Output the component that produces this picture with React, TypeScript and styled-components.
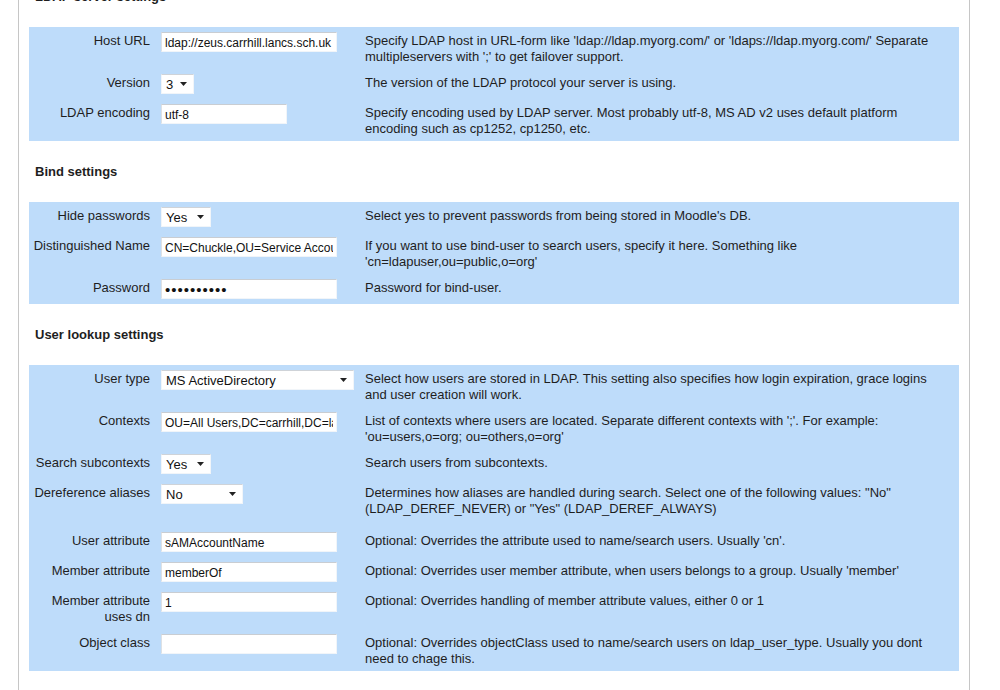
import React from 'react';
import styled, { createGlobalStyle } from 'styled-components';

const PANEL_BLUE = '#bedcfa';
const TEXT = '#1e1e1e';

const GlobalStyle = createGlobalStyle`
  html, body {
    margin: 0;
    padding: 0;
    background: #fff;
    overflow: hidden;
  }
  body {
    font-family: "Liberation Sans", Arial, sans-serif;
    font-size: 13px;
    color: ${TEXT};
  }
`;

const Page = styled.div`
  margin: -34px 0 0 18px;
  width: 930px;
  padding: 0 10px 40px;
  border-left: 1px solid #c6c6c6;
  border-right: 1px solid #c6c6c6;
`;

const SectionTitle = styled.h3`
  margin: 0;
  padding: 23px 0 22px 6px;
  font-size: 13px;
  line-height: 16px;
  font-weight: bold;
`;

const Panel = styled.div`
  background: ${PANEL_BLUE};
  display: flex;
  flex-direction: column;
`;

const Row = styled.div<{ $extra?: number }>`
  display: grid;
  grid-template-columns: 132px 204px 1fr;
  box-sizing: border-box;
  min-height: ${p => 30 + (p.$extra || 0)}px;
  padding: 5px 0 ${p => 4 + (p.$extra || 0)}px;
`;

const Label = styled.div`
  text-align: right;
  padding: 1px 11px 0 2px;
  line-height: 16px;
`;

const Field = styled.div`
  display: flex;
  align-items: flex-start;
`;

const Description = styled.div`
  padding: 1px 20px 0 0;
  line-height: 16px;
`;

const TextInput = styled.input<{ $w: number; $secret?: boolean }>`
  box-sizing: border-box;
  width: ${p => p.$w}px;
  height: 20px;
  margin: 0;
  padding: ${p => (p.$secret ? '0 3px' : '1px 3px 0')};
  border: 1px solid #f1f5f9;
  border-top-color: #c9cdd2;
  border-left-color: #dde1e5;
  background: #fff;
  font-family: "Liberation Sans", Arial, sans-serif;
  font-size: ${p => (p.$secret ? '15px' : '12px')};
  letter-spacing: ${p => (p.$secret ? '1px' : 'normal')};
  color: #111;
  outline: none;
`;

const SelectWrap = styled.span<{ $w: number }>`
  position: relative;
  display: inline-block;
  width: ${p => p.$w}px;
  height: 20px;
`;

const Select = styled.select`
  appearance: none;
  -webkit-appearance: none;
  box-sizing: border-box;
  width: 100%;
  height: 20px;
  margin: 0;
  padding: 1px 14px 0 4px;
  border: 1px solid #f1f5f9;
  border-top-color: #cfd3d8;
  border-radius: 0;
  background: #fff;
  font-family: "Liberation Sans", Arial, sans-serif;
  font-size: 13px;
  color: #111;
  outline: none;
`;

const Arrow = styled.svg`
  position: absolute;
  right: 7px;
  top: 8px;
  width: 7px;
  height: 4px;
  pointer-events: none;
`;

type Setting = {
  label: string;
  kind: 'text' | 'password' | 'select';
  value: string;
  width: number;
  desc: React.ReactNode;
  extra?: number;
};

const DropDown: React.FC<{ value: string; width: number }> = ({ value, width }) => (
  <SelectWrap $w={width}>
    <Select defaultValue={value}>
      <option value={value}>{value}</option>
    </Select>
    <Arrow viewBox="0 0 7 4">
      <path d="M0 0 H7 L3.5 4 Z" fill="#222" />
    </Arrow>
  </SelectWrap>
);

const SettingRow: React.FC<{ s: Setting }> = ({ s }) => (
  <Row $extra={s.extra}>
    <Label>{s.label}</Label>
    <Field>
      {s.kind === 'select' ? (
        <DropDown value={s.value} width={s.width} />
      ) : (
        <TextInput
          type={s.kind}
          $w={s.width}
          $secret={s.kind === 'password'}
          defaultValue={s.value}
        />
      )}
    </Field>
    <Description>{s.desc}</Description>
  </Row>
);

const serverSettings: Setting[] = [
  {
    label: 'Host URL',
    kind: 'text',
    value: 'ldap://zeus.carrhill.lancs.sch.uk',
    width: 176,
    desc: "Specify LDAP host in URL-form like 'ldap://ldap.myorg.com/' or 'ldaps://ldap.myorg.com/' Separate multipleservers with ';' to get failover support.",
  },
  { label: 'Version', kind: 'select', value: '3', width: 33, desc: 'The version of the LDAP protocol your server is using.' },
  {
    label: 'LDAP encoding',
    kind: 'text',
    value: 'utf-8',
    width: 126,
    desc: 'Specify encoding used by LDAP server. Most probably utf-8, MS AD v2 uses default platform encoding such as cp1252, cp1250, etc.',
  },
];

const bindSettings: Setting[] = [
  { label: 'Hide passwords', kind: 'select', value: 'Yes', width: 50, desc: "Select yes to prevent passwords from being stored in Moodle's DB." },
  {
    label: 'Distinguished Name',
    kind: 'text',
    value: 'CN=Chuckle,OU=Service Accounts,DC=carrhill',
    width: 176,
    desc: "If you want to use bind-user to search users, specify it here. Something like 'cn=ldapuser,ou=public,o=org'",
  },
  { label: 'Password', kind: 'password', value: 'xxxxxxxxxx', width: 176, desc: 'Password for bind-user.' },
];

const lookupSettings: Setting[] = [
  {
    label: 'User type',
    kind: 'select',
    value: 'MS ActiveDirectory',
    width: 193,
    desc: 'Select how users are stored in LDAP. This setting also specifies how login expiration, grace logins and user creation will work.',
  },
  {
    label: 'Contexts',
    kind: 'text',
    value: 'OU=All Users,DC=carrhill,DC=lancs',
    width: 176,
    desc: "List of contexts where users are located. Separate different contexts with ';'. For example: 'ou=users,o=org; ou=others,o=org'",
  },
  { label: 'Search subcontexts', kind: 'select', value: 'Yes', width: 50, desc: 'Search users from subcontexts.' },
  {
    label: 'Dereference aliases',
    kind: 'select',
    value: 'No',
    width: 82,
    extra: 6,
    desc: 'Determines how aliases are handled during search. Select one of the following values: "No" (LDAP_DEREF_NEVER) or "Yes" (LDAP_DEREF_ALWAYS)',
  },
  { label: 'User attribute', kind: 'text', value: 'sAMAccountName', width: 176, desc: "Optional: Overrides the attribute used to name/search users. Usually 'cn'." },
  { label: 'Member attribute', kind: 'text', value: 'memberOf', width: 176, desc: "Optional: Overrides user member attribute, when users belongs to a group. Usually 'member'" },
  { label: 'Member attribute uses dn', kind: 'text', value: '1', width: 176, desc: 'Optional: Overrides handling of member attribute values, either 0 or 1' },
  {
    label: 'Object class',
    kind: 'text',
    value: '',
    width: 176,
    desc: 'Optional: Overrides objectClass used to name/search users on ldap_user_type. Usually you dont need to chage this.',
  },
];

const sections = [
  { title: 'LDAP server settings', items: serverSettings },
  { title: 'Bind settings', items: bindSettings },
  { title: 'User lookup settings', items: lookupSettings },
];

export default function App() {
  return (
    <>
      <GlobalStyle />
      <Page>
        {sections.map(sec => (
          <section key={sec.title}>
            <SectionTitle>{sec.title}</SectionTitle>
            <Panel>
              {sec.items.map(s => (
                <SettingRow key={s.label} s={s} />
              ))}
            </Panel>
          </section>
        ))}
      </Page>
    </>
  );
}
